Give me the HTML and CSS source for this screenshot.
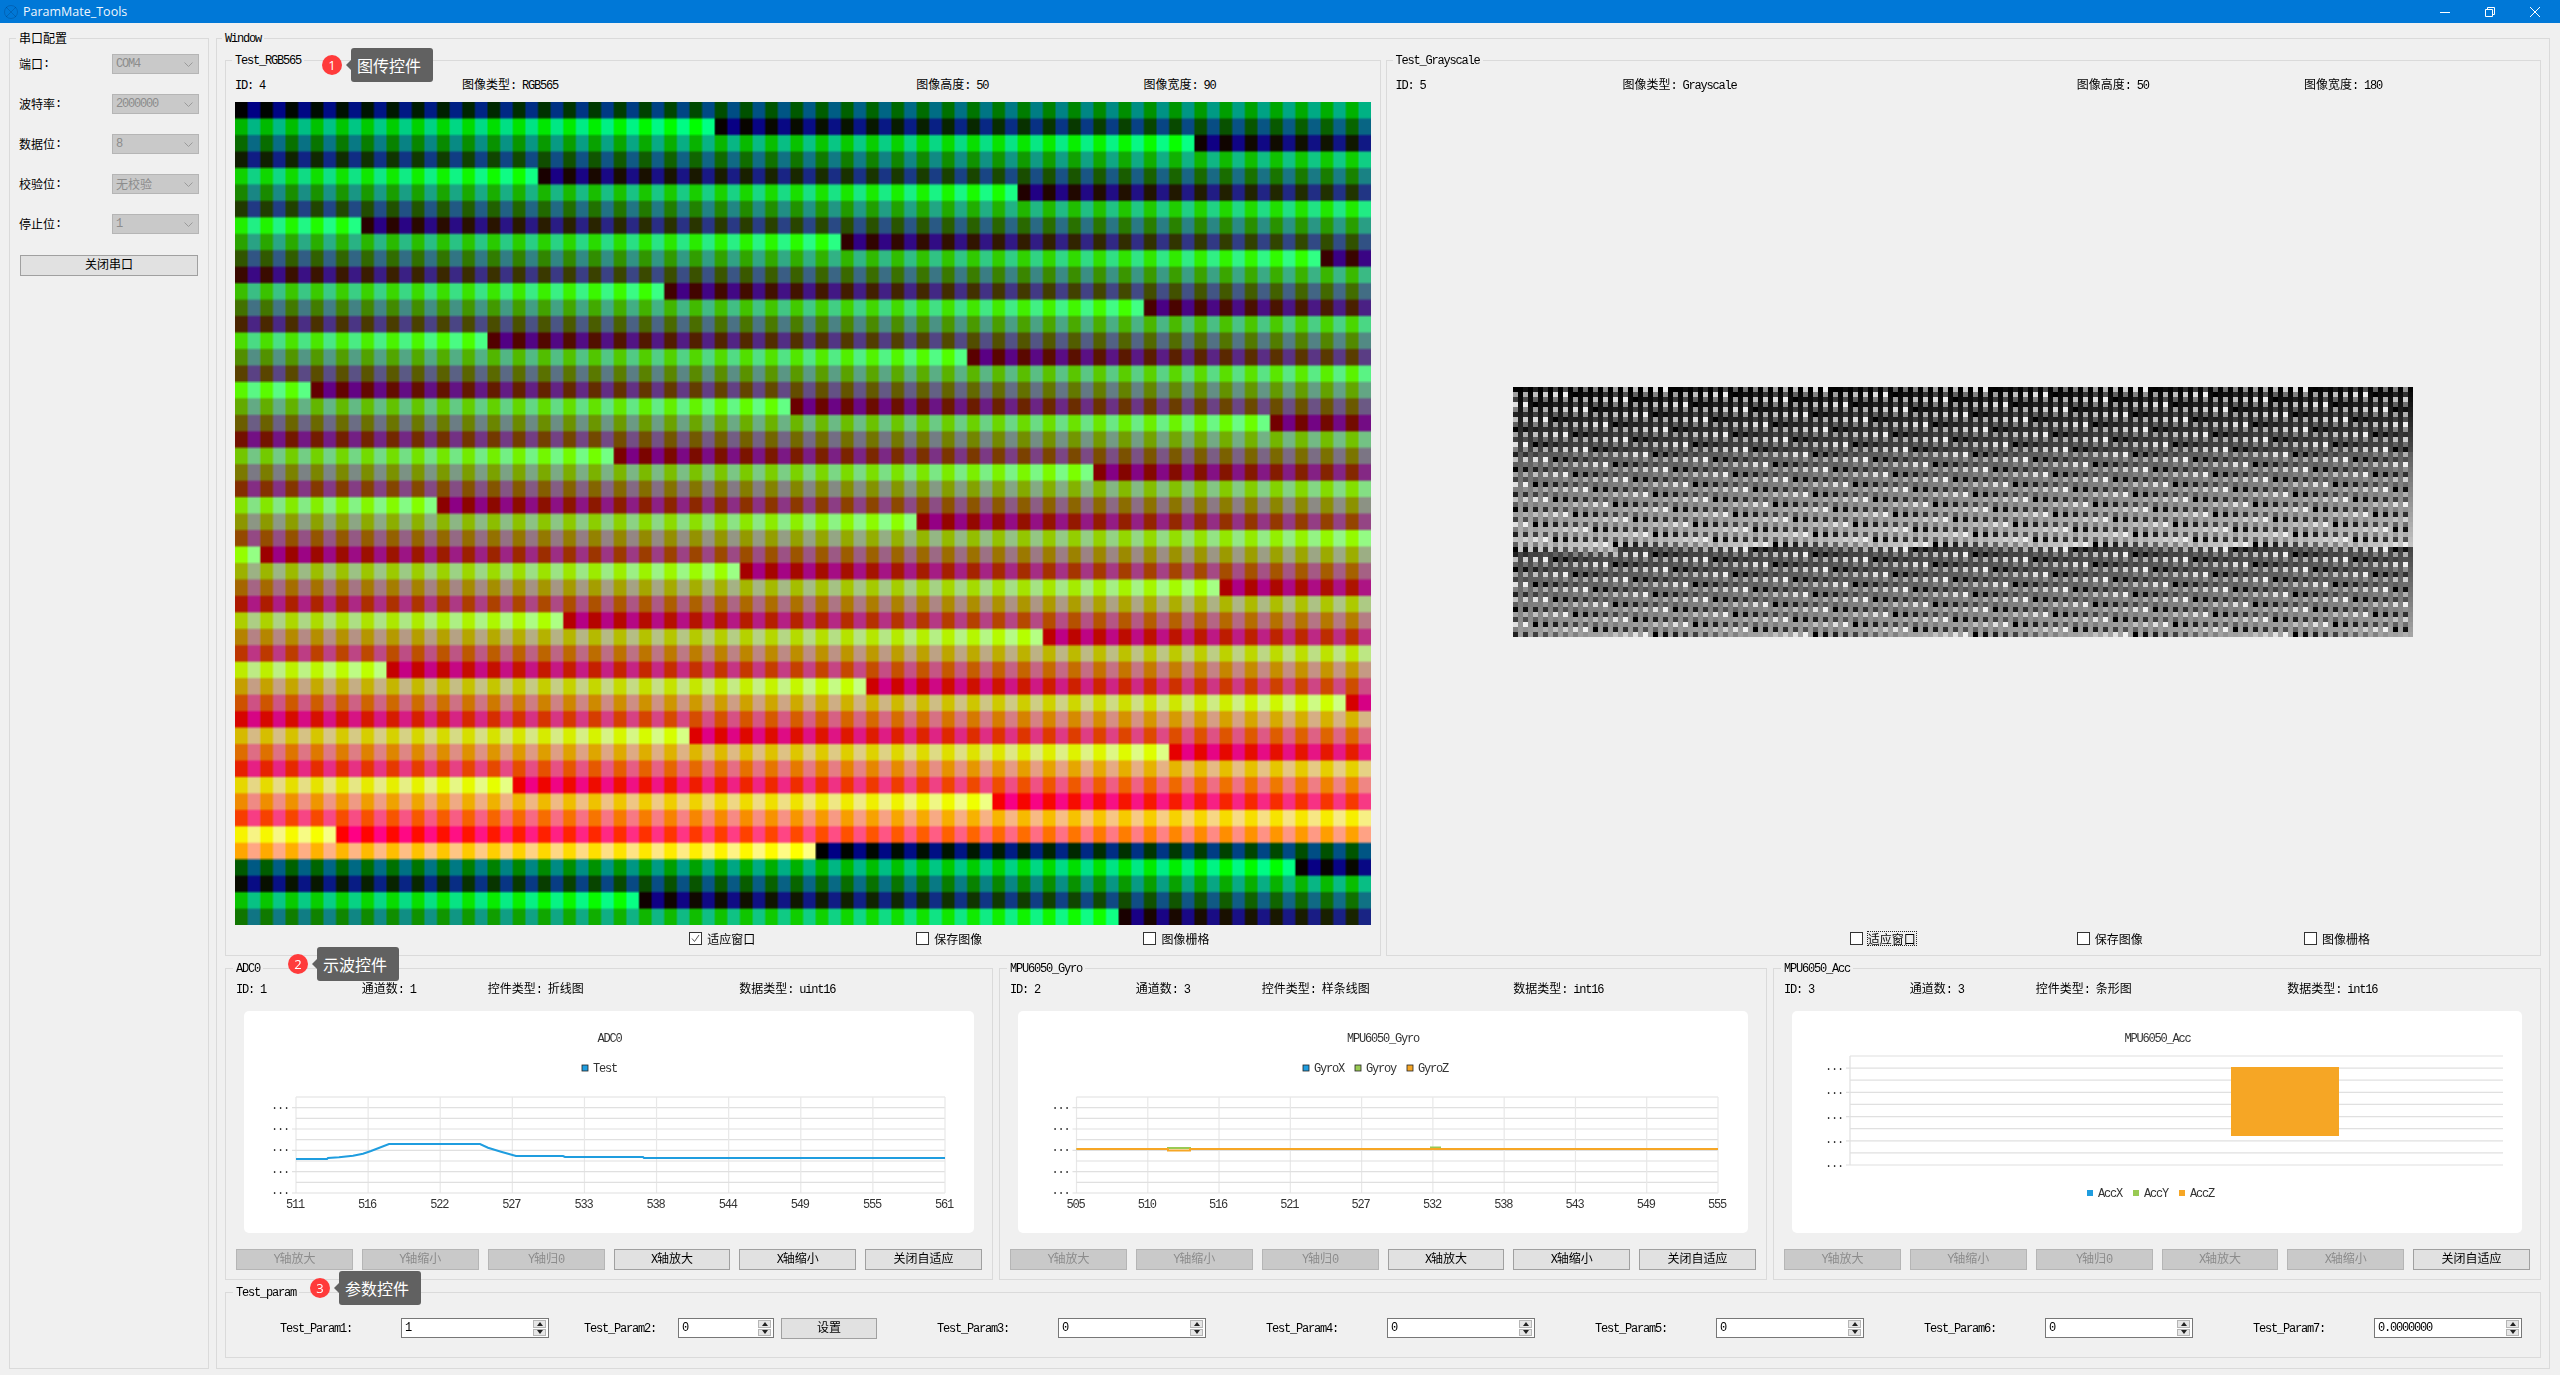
FILE: index.html
```html
<!DOCTYPE html>
<html lang="zh-CN">
<head>
<meta charset="UTF-8">
<title>ParamMate_Tools</title>
<link rel="stylesheet" href="styles.css">
</head>
<body>

<div class="page">
  <div class="titlebar">
    <svg class="app-icon" width="16" height="16" viewBox="0 0 16 16"><circle cx="8" cy="8" r="6.5"/><path d="M3 3l10 10M13 3L3 13"/></svg>
    <span class="app-name">ParamMate_Tools</span>
    <div class="win-btns">
      <svg width="10" height="10" viewBox="0 0 10 10"><path d="M0 5.5h10"/></svg>
      <svg width="10" height="10" viewBox="0 0 10 10"><path d="M.5 2.5h7v7h-7zM2.5 2.5v-2h7v7h-2"/></svg>
      <svg width="10" height="10" viewBox="0 0 10 10"><path d="M0 0l10 10M10 0L0 10"/></svg>
    </div>
  </div>

  <div class="main">
    <fieldset class="group side">
      <legend class="cn">串口配置</legend>
      <div class="port-row"><span class="cn">端口</span>:<div class="combo">COM4<svg width="9" height="5" viewBox="0 0 9 5"><path d="M.5.5l4 4 4-4"/></svg></div></div>
      <div class="port-row"><span class="cn">波特率</span>:<div class="combo">2000000<svg width="9" height="5" viewBox="0 0 9 5"><path d="M.5.5l4 4 4-4"/></svg></div></div>
      <div class="port-row"><span class="cn">数据位</span>:<div class="combo">8<svg width="9" height="5" viewBox="0 0 9 5"><path d="M.5.5l4 4 4-4"/></svg></div></div>
      <div class="port-row"><span class="cn">校验位</span>:<div class="combo"><span class="cn">无校验</span><svg width="9" height="5" viewBox="0 0 9 5"><path d="M.5.5l4 4 4-4"/></svg></div></div>
      <div class="port-row"><span class="cn">停止位</span>:<div class="combo">1<svg width="9" height="5" viewBox="0 0 9 5"><path d="M.5.5l4 4 4-4"/></svg></div></div>
      <button class="btn port-btn"><span class="cn">关闭串口</span></button>
    </fieldset>

    <fieldset class="group window">
      <legend>Window</legend>

      <div class="image-row">
        <fieldset class="group image-box">
          <legend>Test_RGB565</legend>
          <div class="five-col">
            <div>ID: 4</div>
            <div class="span-3"><span class="cn">图像类型</span>: RGB565</div>
            <div><span class="cn">图像高度</span>: 50</div>
            <div><span class="cn">图像宽度</span>: 90</div>
          </div>
          <div class="image-area"><canvas id="imgRgb" class="img-rgb" width="540" height="300"></canvas></div>
          <div class="five-col check-row">
            <label class="check col-3"><i class="box"><svg width="11" height="11" viewBox="0 0 11 11"><path d="M2 5.5l2.5 3L9 2"/></svg></i><span class="cn">适应窗口</span></label>
            <label class="check"><i class="box"></i><span class="cn">保存图像</span></label>
            <label class="check"><i class="box"></i><span class="cn">图像栅格</span></label>
          </div>
        </fieldset>

        <fieldset class="group image-box">
          <legend>Test_Grayscale</legend>
          <div class="five-col">
            <div>ID: 5</div>
            <div class="span-3"><span class="cn">图像类型</span>: Grayscale</div>
            <div><span class="cn">图像高度</span>: 50</div>
            <div><span class="cn">图像宽度</span>: 180</div>
          </div>
          <div class="image-area"><canvas id="imgGray" class="img-gray" width="180" height="50"></canvas></div>
          <div class="five-col check-row">
            <label class="check col-3"><i class="box"></i><span class="cn focus">适应窗口</span></label>
            <label class="check"><i class="box"></i><span class="cn">保存图像</span></label>
            <label class="check"><i class="box"></i><span class="cn">图像栅格</span></label>
          </div>
        </fieldset>
      </div>

      <div class="scope-row">
        <fieldset class="group scope">
          <legend>ADC0</legend>
          <div class="six-col">
            <div>ID: 1</div>
            <div><span class="cn">通道数</span>: 1</div>
            <div class="span-2"><span class="cn">控件类型</span>: <span class="cn">折线图</span></div>
            <div class="span-2"><span class="cn">数据类型</span>: uint16</div>
          </div>
          <div class="card"><svg id="chartAdc" class="chart"></svg></div>
          <div class="six-col btn-row">
            <button class="btn off">Y<span class="cn">轴放大</span></button>
            <button class="btn off">Y<span class="cn">轴缩小</span></button>
            <button class="btn off">Y<span class="cn">轴归</span>0</button>
            <button class="btn">X<span class="cn">轴放大</span></button>
            <button class="btn">X<span class="cn">轴缩小</span></button>
            <button class="btn"><span class="cn">关闭自适应</span></button>
          </div>
        </fieldset>

        <fieldset class="group scope">
          <legend>MPU6050_Gyro</legend>
          <div class="six-col">
            <div>ID: 2</div>
            <div><span class="cn">通道数</span>: 3</div>
            <div class="span-2"><span class="cn">控件类型</span>: <span class="cn">样条线图</span></div>
            <div class="span-2"><span class="cn">数据类型</span>: int16</div>
          </div>
          <div class="card"><svg id="chartGyro" class="chart"></svg></div>
          <div class="six-col btn-row">
            <button class="btn off">Y<span class="cn">轴放大</span></button>
            <button class="btn off">Y<span class="cn">轴缩小</span></button>
            <button class="btn off">Y<span class="cn">轴归</span>0</button>
            <button class="btn">X<span class="cn">轴放大</span></button>
            <button class="btn">X<span class="cn">轴缩小</span></button>
            <button class="btn"><span class="cn">关闭自适应</span></button>
          </div>
        </fieldset>

        <fieldset class="group scope">
          <legend>MPU6050_Acc</legend>
          <div class="six-col">
            <div>ID: 3</div>
            <div><span class="cn">通道数</span>: 3</div>
            <div class="span-2"><span class="cn">控件类型</span>: <span class="cn">条形图</span></div>
            <div class="span-2"><span class="cn">数据类型</span>: int16</div>
          </div>
          <div class="card"><svg id="chartAcc" class="chart"></svg></div>
          <div class="six-col btn-row">
            <button class="btn off">Y<span class="cn">轴放大</span></button>
            <button class="btn off">Y<span class="cn">轴缩小</span></button>
            <button class="btn off">Y<span class="cn">轴归</span>0</button>
            <button class="btn off">X<span class="cn">轴放大</span></button>
            <button class="btn off">X<span class="cn">轴缩小</span></button>
            <button class="btn"><span class="cn">关闭自适应</span></button>
          </div>
        </fieldset>
      </div>

      <fieldset class="group params">
        <legend>Test_param</legend>
        <div class="param-row">
          <div class="param">
            <span class="param-name">Test_Param1:</span>
            <div class="spin"><span>1</span><div class="spin-btns"><i class="up"></i><i class="down"></i></div></div>
          </div>
          <div class="param param-2">
            <span class="param-name">Test_Param2:</span>
            <div class="spin"><span>0</span><div class="spin-btns"><i class="up"></i><i class="down"></i></div></div>
            <button class="btn set-btn"><span class="cn">设置</span></button>
          </div>
          <div class="param">
            <span class="param-name">Test_Param3:</span>
            <div class="spin"><span>0</span><div class="spin-btns"><i class="up"></i><i class="down"></i></div></div>
          </div>
          <div class="param">
            <span class="param-name">Test_Param4:</span>
            <div class="spin"><span>0</span><div class="spin-btns"><i class="up"></i><i class="down"></i></div></div>
          </div>
          <div class="param">
            <span class="param-name">Test_Param5:</span>
            <div class="spin"><span>0</span><div class="spin-btns"><i class="up"></i><i class="down"></i></div></div>
          </div>
          <div class="param">
            <span class="param-name">Test_Param6:</span>
            <div class="spin"><span>0</span><div class="spin-btns"><i class="up"></i><i class="down"></i></div></div>
          </div>
          <div class="param">
            <span class="param-name">Test_Param7:</span>
            <div class="spin"><span>0.0000000</span><div class="spin-btns"><i class="up"></i><i class="down"></i></div></div>
          </div>
        </div>
      </fieldset>
    </fieldset>
  </div>

  <div class="callout callout-1"><b>1</b><span>图传控件</span></div>
  <div class="callout callout-2"><b>2</b><span>示波控件</span></div>
  <div class="callout callout-3"><b>3</b><span>参数控件</span></div>
</div>

<script src="app.js"></script>
</body>
</html>
```

FILE: styles.css
```css
* {
  box-sizing: border-box;
}

html, body {
  margin: 0;
  background-color: #f0f0f0;
}

.page {
  position: relative;
  display: flex;
  flex-direction: column;
  width: 2560px;
  height: 1375px;
  overflow: hidden;
  font-family: "Liberation Mono", "Noto Sans CJK SC", monospace;
  font-size: 12px;
  letter-spacing: -1.2px;
  line-height: 14px;
  color: #000;
}

.cn {
  font-family: "Noto Sans CJK SC", sans-serif;
  font-size: 12px;
  letter-spacing: 0;
  line-height: 0;
}

/* title bar */
.titlebar {
  display: flex;
  align-items: center;
  flex: none;
  height: 23px;
  padding-left: 3px;
  background-color: #0078d7;
  color: #eef6fd;
}

.app-icon {
  fill: none;
  stroke: rgba(0, 40, 90, 0.25);
}

.app-name {
  margin-left: 4px;
  font-family: "Open Sans", sans-serif;
  font-size: 12.5px;
  letter-spacing: 0;
}

.win-btns {
  display: flex;
  gap: 35px;
  margin-left: auto;
  margin-right: 20px;
}

.win-btns svg {
  fill: none;
  stroke: #fff;
}

/* group boxes */
.main {
  display: flex;
  flex: 1;
  gap: 7px;
  min-height: 0;
  padding: 8px 10px 6px 9px;
}

.group {
  display: flex;
  flex-direction: column;
  min-width: 0;
  margin: 0;
  padding: 0 10px;
  border: 1px solid #dadada;
}

.group legend {
  height: 14px;
  margin-left: -3px;
  padding: 0 3px;
  line-height: 16px;
}

.side {
  flex: none;
  width: 200px;
  padding: 9px 9px 0;
}

.side legend {
  line-height: 14px;
}

.window {
  flex: 1;
  gap: 5px;
  padding: 8px 8px 10px;
}

/* serial port panel */
.port-row {
  display: flex;
  align-items: center;
  height: 20px;
  margin-bottom: 20px;
}

.combo {
  display: flex;
  align-items: center;
  justify-content: space-between;
  width: 87px;
  height: 20px;
  margin-left: auto;
  padding: 0 5px 0 3px;
  background-color: #c9c9c9;
  border: 1px solid #b5b5b5;
  color: #8c8c8c;
}

.combo svg {
  fill: none;
  stroke: #9a9a9a;
}

.btn {
  height: 21px;
  padding: 0;
  background-color: #e1e1e1;
  border: 1px solid #a0a0a0;
  color: #000;
  font: inherit;
  letter-spacing: inherit;
}

.btn.off {
  background-color: #c9c9c9;
  border-color: #b5b5b5;
  color: #8c8c8c;
}

.port-btn {
  margin: 1px 1px 0;
}

/* image boxes */
.image-row, .scope-row {
  display: flex;
  gap: 5px;
}

.image-row {
  flex: 1;
  min-height: 0;
}

.image-box {
  flex: 1;
  padding: 0 9px 10px;
}

.five-col {
  display: grid;
  grid-template-columns: repeat(5, 1fr);
  grid-auto-rows: 14px;
  flex: none;
  margin-top: 12px;
}

.span-3 {
  grid-column: span 2;
}

.image-box .five-col > .span-3 + div {
  grid-column: 4;
}

.image-area {
  display: flex;
  align-items: center;
  justify-content: center;
  flex: 1;
  min-height: 0;
  margin-top: 9px;
}

.img-rgb {
  width: 100%;
  height: 823px;
}

.img-gray {
  width: 900px;
  height: 250px;
  margin-bottom: 3px;
  image-rendering: pixelated;
}

.five-col.check-row {
  grid-auto-rows: 13px;
  margin-top: 7px;
}

.check {
  display: flex;
  align-items: center;
  gap: 5px;
  height: 13px;
}

.check .cn {
  line-height: 13px;
}

.col-3 {
  grid-column: 3;
}

.box {
  display: flex;
  align-items: center;
  justify-content: center;
  width: 13px;
  height: 13px;
  background-color: #fff;
  border: 1px solid #333;
}

.box svg {
  fill: none;
  stroke: #555;
}

.focus {
  outline: 1px dotted #222;
}

/* scope panels */
.scope-row {
  flex: none;
  gap: 6px;
  height: 319px;
}

.scope {
  flex: 1;
  padding-bottom: 9px;
}

.six-col {
  display: grid;
  grid-template-columns: repeat(6, 1fr);
  grid-auto-rows: 14px;
  gap: 0 9px;
  margin-top: 8px;
}

.span-2 {
  grid-column: span 2;
}

.card {
  flex: none;
  height: 222px;
  margin: 14px 8px 0 8px;
  background-color: #fff;
  border-radius: 5px;
}

.chart {
  display: block;
  width: 100%;
  height: 100%;
}

.chart text {
  font-family: "Liberation Mono", "Noto Sans CJK SC", monospace;
  font-size: 12px;
  letter-spacing: -1.2px;
  fill: #333;
}

.six-col.btn-row {
  grid-auto-rows: 21px;
  margin-top: 16px;
}

/* param row */
.params {
  flex: none;
  height: 73px;
}

.param-row {
  display: flex;
  gap: 60px;
  margin: 19px 0 0 44px;
}

.param {
  display: flex;
  align-items: flex-start;
}

.param-name {
  width: 121px;
  line-height: 23px;
}

.spin {
  display: flex;
  justify-content: space-between;
  width: 148px;
  height: 20px;
  padding: 1px;
  background-color: #fff;
  border: 1px solid #777;
  line-height: 16px;
}

.spin > span {
  padding-left: 2px;
}

.spin-btns {
  display: flex;
  flex-direction: column;
  gap: 1px;
  width: 13px;
  margin-right: 1px;
}

.spin-btns i {
  display: flex;
  align-items: center;
  justify-content: center;
  flex: 1;
  background-color: #e6e6e6;
  border: 1px solid #b5b5b5;
}

.spin-btns i::after {
  content: "";
  border-left: 3px solid transparent;
  border-right: 3px solid transparent;
}

.spin-btns .up::after {
  border-bottom: 4px solid #222;
}

.spin-btns .down::after {
  border-top: 4px solid #222;
}

.param-2 {
  margin-left: -25px;
}

.param-2 .param-name {
  width: 94px;
}

.param-2 .spin {
  width: 96px;
}

.set-btn {
  width: 96px;
  margin-left: 7px;
}

/* numbered callouts */
.callout {
  position: absolute;
  display: flex;
  align-items: center;
  gap: 9px;
  font-family: "Noto Sans CJK SC", sans-serif;
  letter-spacing: 0;
}

.callout-1 {
  top: 48px;
  left: 322px;
}

.callout-2 {
  top: 947px;
  left: 288px;
}

.callout-3 {
  top: 1271px;
  left: 310px;
}

.callout b {
  display: flex;
  align-items: center;
  justify-content: center;
  width: 20px;
  height: 20px;
  background-color: #ff3b3b;
  border-radius: 50%;
  color: #fff;
  font-family: "Open Sans", sans-serif;
  font-size: 13px;
  font-weight: 400;
}

.callout span {
  position: relative;
  width: 82px;
  height: 34px;
  padding-left: 6px;
  background-color: #616161;
  border-radius: 3px;
  color: #fff;
  font-size: 16px;
  line-height: 34px;
}

.callout span::before {
  content: "";
  position: absolute;
  top: 12px;
  left: -5px;
  border-top: 5px solid transparent;
  border-bottom: 5px solid transparent;
  border-right: 5px solid #616161;
}
```

FILE: app.js
```js
var BLUE = "#1f9ddf";
var GREEN = "#99ca53";
var ORANGE = "#f6a625";

// the test stream: one 16 bit counter stepping by 16
function drawRgb() {
  var cv = document.getElementById("imgRgb");
  var ctx = cv.getContext("2d");
  for (var i = 0; i < 90 * 50; i++) {
    var v = (i * 16) & 0xffff;
    var r = Math.round((v >> 11) * 255 / 31);
    var g = Math.round(((v >> 5) & 63) * 255 / 63);
    var b = Math.round((v & 31) * 255 / 31);
    ctx.fillStyle = "rgb(" + r + "," + g + "," + b + ")";
    ctx.fillRect((i % 90) * 6, Math.floor(i / 90) * 6, 6, 6);
  }
}

// same counter read byte by byte, the stream jumps twice on the way down
function drawGray() {
  var cv = document.getElementById("imgGray");
  var ctx = cv.getContext("2d");
  for (var j = 0; j < 180 * 50; j++) {
    var n = j;
    if (j >= 5781) {
      n = j - 3728;
    } else if (j >= 2340) {
      n = j + 512;
    }
    var v = ((n >> 1) * 16) & 0xffff;
    var g = n % 2 === 0 ? v & 255 : v >> 8;
    ctx.fillStyle = "rgb(" + g + "," + g + "," + g + ")";
    ctx.fillRect(j % 180, Math.floor(j / 180), 1, 1);
  }
}

function el(svg, name, attrs, text) {
  var n = document.createElementNS("http://www.w3.org/2000/svg", name);
  for (var a in attrs) {
    n.setAttribute(a, attrs[a]);
  }
  if (text) {
    n.textContent = text;
  }
  svg.appendChild(n);
  return n;
}

function line(svg, x1, y1, x2, y2, color) {
  el(svg, "line", { x1: x1, y1: y1, x2: x2, y2: y2, stroke: color, "stroke-width": 1.2 });
}

function axes(svg, c) {
  var w = (c.right - c.left) / 9;
  var h = (c.bottom - c.top) / 9;
  for (var i = 0; i < 10; i++) {
    var y = c.top + h * i;
    var tick = i % 2 === 0 ? 0 : 4;
    line(svg, c.left - tick, y, c.right, y, "#e0e0e0");
    if (c.xLabels) {
      var x = c.left + w * i;
      line(svg, x, c.top, x, c.bottom, "#e8e8e8");
      el(svg, "text", { x: x - 1, y: c.bottom + 15, "text-anchor": "middle" }, c.xLabels[i]);
    }
  }
  if (!c.xLabels) {
    line(svg, c.left, c.top, c.left, c.bottom, "#e0e0e0");
  }
  c.yDots.forEach(function(y) {
    el(svg, "text", { x: c.left - 16, y: y, "text-anchor": "middle" }, "...");
  });
}

function legend(svg, items, y, border) {
  items.forEach(function(it) {
    el(svg, "rect", {
      x: it.x, y: y - 3, width: 6, height: 6, fill: it.color,
      stroke: border ? "#222" : "none", "stroke-width": 0.8
    });
    el(svg, "text", { x: it.x + 11, y: y + 4 }, it.name);
  });
}

function title(svg, text, width) {
  el(svg, "text", { x: width / 2, y: 31, "text-anchor": "middle" }, text);
}

function polyline(svg, pts, color) {
  el(svg, "polyline", { points: pts, fill: "none", stroke: color, "stroke-width": 2 });
}

function drawAdc() {
  var svg = document.getElementById("chartAdc");
  title(svg, "ADC0", 731);
  legend(svg, [{ x: 338, color: BLUE, name: "Test" }], 57, true);
  axes(svg, {
    left: 52, right: 701, top: 86, bottom: 182,
    xLabels: ["511", "516", "522", "527", "533", "538", "544", "549", "555", "561"],
    yDots: [98, 119, 140, 162, 183]
  });
  polyline(svg, "52,148 83,148 84,147 95,146.3 109,144.7 119,142.7 127,140 145,133 236,133 244,136.7 " +
    "257,140.7 272,145 319,145 321,146 399,146 400,147 701,147", BLUE);
}

function drawGyro() {
  var svg = document.getElementById("chartGyro");
  title(svg, "MPU6050_Gyro", 730);
  legend(svg, [
    { x: 285, color: BLUE, name: "GyroX" },
    { x: 337, color: GREEN, name: "Gyroy" },
    { x: 389, color: ORANGE, name: "GyroZ" }
  ], 57, true);
  axes(svg, {
    left: 58.5, right: 700, top: 86, bottom: 182,
    xLabels: ["505", "510", "516", "521", "527", "532", "538", "543", "549", "555"],
    yDots: [98, 119, 140, 162, 183]
  });
  polyline(svg, "58.5,138 150,138 150,137 172,137 172,138 413,138 413,136.5 422,136.5 422,138 700,138", GREEN);
  polyline(svg, "58.5,138 150,138 150,139.5 172,139.5 172,138 700,138", ORANGE);
}

function drawAcc() {
  var svg = document.getElementById("chartAcc");
  title(svg, "MPU6050_Acc", 731);
  axes(svg, {
    left: 58, right: 711, top: 45, bottom: 154,
    yDots: [59, 83, 108, 132, 156]
  });
  el(svg, "rect", { x: 439, y: 56, width: 108, height: 69, fill: ORANGE });
  legend(svg, [
    { x: 295, color: BLUE, name: "AccX" },
    { x: 341, color: GREEN, name: "AccY" },
    { x: 387, color: ORANGE, name: "AccZ" }
  ], 182, false);
}

drawRgb();
drawGray();
drawAdc();
drawGyro();
drawAcc();
```
